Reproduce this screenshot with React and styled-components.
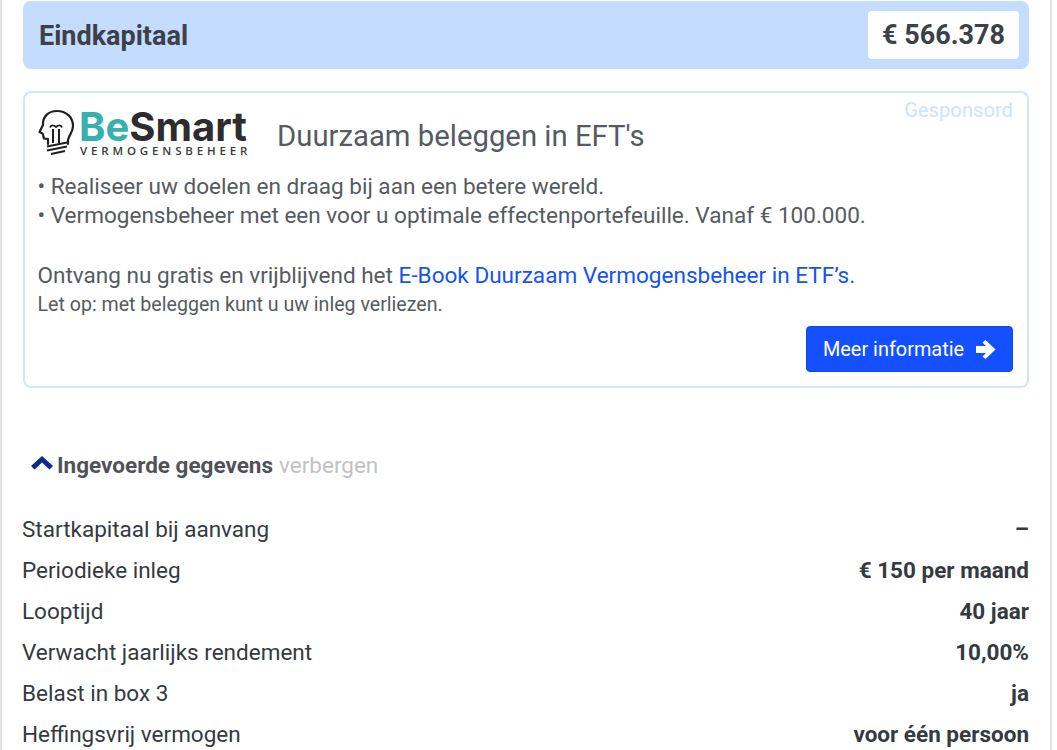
import React from "react";
import styled, { createGlobalStyle } from "styled-components";

const Global = createGlobalStyle`
  html, body { margin: 0; padding: 0; background: #fff; overflow: hidden; height: 750px; }
  body { font-family: Roboto, "Liberation Sans", sans-serif; color: #343a40; }
`;

const Page = styled.div`
  box-sizing: border-box;
  width: 1052px;
  height: 750px;
  overflow: hidden;
  border-left: 2px solid #e4e4e4;
  border-right: 2px solid #e4e4e4;
  padding: 1px 21px 0 21px;
`;

const Banner = styled.div`
  height: 68px;
  box-sizing: border-box;
  background: #c3dcff;
  border-radius: 8px;
  display: flex;
  align-items: center;
  justify-content: space-between;
  padding: 0 10px 0 16px;
`;

const BannerTitle = styled.div`
  font-size: 27px;
  font-weight: 700;
  color: #3c4147;
  padding-top: 2px;
`;

const BannerValue = styled.div`
  width: 151px;
  height: 48px;
  box-sizing: border-box;
  background: #fff;
  border-radius: 4px;
  display: flex;
  align-items: center;
  justify-content: center;
  font-size: 27px;
  font-weight: 700;
  color: #3c4147;
`;

const Card = styled.section`
  position: relative;
  box-sizing: border-box;
  height: 297px;
  margin-top: 22px;
  border: 2px solid #d3e4ff;
  border-radius: 8px;
  padding: 13px 14px 0 13px;
  display: flex;
  flex-direction: column;
`;

const Sponsored = styled.div`
  position: absolute;
  top: 5px;
  right: 14px;
  font-size: 20.2px;
  color: #cfe2ff;
`;

const Head = styled.div`
  display: flex;
  align-items: center;
  height: 55px;
`;

const Logo = styled.div`
  display: flex;
  align-items: flex-start;
  width: 239px;
  margin-top: -3px;
`;

const LogoWords = styled.div`
  display: flex;
  flex-direction: column;
  margin-left: 3px;
`;

const LogoName = styled.div`
  font-family: Inter, "Open Sans", sans-serif;
  font-size: 40px;
  font-weight: 700;
  line-height: 36px;
  color: #2d2d2f;
`;

const LogoBe = styled.span`
  color: #37b1ad;
`;

const LogoSub = styled.div`
  font-family: "Open Sans", Lato, sans-serif;
  font-size: 11.5px;
  font-weight: 600;
  line-height: 11px;
  letter-spacing: 3.85px;
  color: #3a3a3c;
  margin-left: 1px;
  white-space: nowrap;
`;

const Headline = styled.h2`
  margin: 0;
  padding-top: 4px;
  font-size: 29.3px;
  font-weight: 400;
  color: #555b60;
`;

const Body = styled.div`
  margin: 12px 0 0 -0.5px;
  font-size: 22.55px;
  line-height: 28.5px;
  color: #555b60;
`;

const Gap = styled.div`
  height: 31.5px;
`;

const Promo = styled.a`
  color: #1553f5;
  text-decoration: none;
`;

const Note = styled.div`
  margin: 0 0 0 -0.5px;
  font-size: 19.6px;
  line-height: 30px;
  color: #555b60;
`;

const Actions = styled.div`
  display: flex;
  justify-content: flex-end;
  margin-top: 6px;
`;

const Button = styled.button`
  width: 207px;
  height: 46px;
  border: 1px solid #0d47e8;
  border-radius: 4px;
  background: #1450ff;
  color: #fff;
  font-family: inherit;
  font-size: 19.9px;
  display: flex;
  align-items: center;
  justify-content: center;
  gap: 12px;
  padding: 0;
`;

const Toggle = styled.div`
  display: flex;
  align-items: center;
  margin: 62px 0 0 8px;
  height: 30px;
  font-size: 22.5px;
`;

const ToggleIcon = styled.svg`
  width: 22px;
  height: 14px;
  margin-top: -5px;
  fill: #0a2a8c;
`;

const ToggleStrong = styled.strong`
  font-weight: 700;
  color: #4f5357;
  margin-left: 4px;
`;

const ToggleHint = styled.span`
  color: #c2c2c2;
  margin-left: 6px;
`;

const Rows = styled.div`
  margin: 28px 0 0 -1px;
`;

const Row = styled.div`
  display: flex;
  justify-content: space-between;
  align-items: center;
  height: 41px;
  font-size: 22.5px;
  color: #343a40;
`;

const RowValue = styled.span`
  font-weight: 700;
`;

const rows = [
  ["Startkapitaal bij aanvang", "–"],
  ["Periodieke inleg", "€ 150 per maand"],
  ["Looptijd", "40 jaar"],
  ["Verwacht jaarlijks rendement", "10,00%"],
  ["Belast in box 3", "ja"],
  ["Heffingsvrij vermogen", "voor één persoon"],
];

const HeadBulb = () => (
  <svg width="38" height="46" viewBox="0 0 38 46" fill="none" stroke="#1f1f21" strokeWidth="2.2">
    <path d="M10 35 V30 L6 29.5 C5 27 5.5 25.5 4.5 24.5 L1.5 23 L5 16 C4.5 7 11 2 19 2 C28 2 35 8 35 17 C35 23 31 26 30 31 V35" strokeLinejoin="round" strokeLinecap="round" />
    <path d="M15 20 V34 M21 20 V34" strokeWidth="2" />
    <path d="M12 18.5 C13 15.5 16 16 18 18 C20 16 23 15.5 24 18.5" strokeWidth="1.8" />
    <path d="M9 37.5 L29 33.5 M9 41.5 L29 37.5 M13 45 L27 42" strokeWidth="1.8" />
  </svg>
);

const ArrowRight = () => (
  <svg width="20" height="19" viewBox="0 0 20 19" fill="#fff">
    <path d="M0 6 H10 L6.5 2.5 L9.5 0 L19.5 9.5 L9.5 19 L6.5 16.5 L10 13 H0 Z" />
  </svg>
);

export default function App() {
  return (
    <Page>
      <Global />
      <Banner>
        <BannerTitle>Eindkapitaal</BannerTitle>
        <BannerValue>€ 566.378</BannerValue>
      </Banner>
      <Card>
        <Sponsored>Gesponsord</Sponsored>
        <Head>
          <Logo>
            <HeadBulb />
            <LogoWords>
              <LogoName>
                <LogoBe>Be</LogoBe>Smart
              </LogoName>
              <LogoSub>VERMOGENSBEHEER</LogoSub>
            </LogoWords>
          </Logo>
          <Headline>Duurzaam beleggen in EFT's</Headline>
        </Head>
        <Body>
          • Realiseer uw doelen en draag bij aan een betere wereld.
          <br />• Vermogensbeheer met een voor u optimale effectenportefeuille. Vanaf € 100.000.
          <Gap />
          Ontvang nu gratis en vrijblijvend het <Promo>E-Book Duurzaam Vermogensbeheer in ETF’s.</Promo>
        </Body>
        <Note>Let op: met beleggen kunt u uw inleg verliezen.</Note>
        <Actions>
          <Button>
            Meer informatie <ArrowRight />
          </Button>
        </Actions>
      </Card>
      <Toggle>
        <ToggleIcon viewBox="0 0 22 14">
          <path d="M11 0 L22 10 L18.5 13.5 L11 6.5 L3.5 13.5 L0 10 Z" />
        </ToggleIcon>
        <ToggleStrong>Ingevoerde gegevens</ToggleStrong>
        <ToggleHint>verbergen</ToggleHint>
      </Toggle>
      <Rows>
        {rows.map(([label, value]) => (
          <Row key={label}>
            <span>{label}</span>
            <RowValue>{value}</RowValue>
          </Row>
        ))}
      </Rows>
    </Page>
  );
}
